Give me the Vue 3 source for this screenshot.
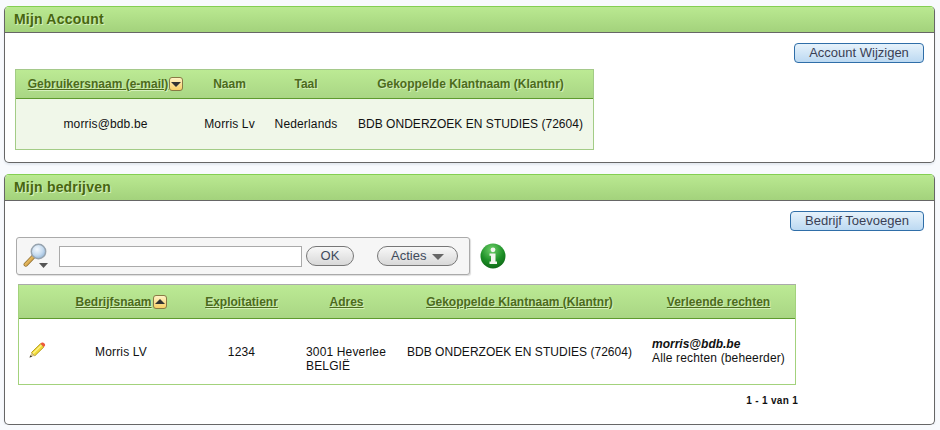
<template>
  <div class="page">
    <section class="panel">
      <h2 class="panel__title">Mijn Account</h2>
      <div class="panel__body panel__body--account">
        <div class="actions">
          <button type="button" class="btn-blue btn-blue--account">Account Wijzigen</button>
        </div>
        <table class="grid grid--account">
          <colgroup>
            <col class="col-user" />
            <col class="col-person" />
            <col class="col-lang" />
            <col class="col-linked" />
          </colgroup>
          <thead>
            <tr>
              <th>
                <span class="sort">
                  <a class="sort__link">Gebruikersnaam (e-mail)</a>
                  <span class="sort__icon"><i class="tri tri--down"></i></span>
                </span>
              </th>
              <th>Naam</th>
              <th>Taal</th>
              <th>Gekoppelde Klantnaam (Klantnr)</th>
            </tr>
          </thead>
          <tbody>
            <tr>
              <td>morris@bdb.be</td>
              <td>Morris Lv</td>
              <td>Nederlands</td>
              <td class="cell-client">BDB ONDERZOEK EN STUDIES (72604)</td>
            </tr>
          </tbody>
        </table>
      </div>
    </section>

    <section class="panel panel--second">
      <h2 class="panel__title">Mijn bedrijven</h2>
      <div class="panel__body panel__body--companies">
        <div class="actions">
          <button type="button" class="btn-blue btn-blue--company">Bedrijf Toevoegen</button>
        </div>

        <div class="toolbar-row">
          <div class="toolbar">
            <svg class="toolbar__lens" width="28" height="26" viewBox="0 0 28 26">
              <defs>
                <radialGradient id="glass" cx="0.4" cy="0.35" r="0.7">
                  <stop offset="0" stop-color="#f4f9fe" />
                  <stop offset="0.6" stop-color="#c4daef" />
                  <stop offset="1" stop-color="#8fb2d4" />
                </radialGradient>
                <linearGradient id="handle" x1="0" y1="0" x2="1" y2="1">
                  <stop offset="0" stop-color="#f6d98c" />
                  <stop offset="1" stop-color="#c98a26" />
                </linearGradient>
              </defs>
              <path d="M10.5 13.5 L2.8 21.5" stroke="#8a6a2c" stroke-width="4.4" stroke-linecap="round" />
              <path d="M10.5 13.5 L2.8 21.5" stroke="url(#handle)" stroke-width="3" stroke-linecap="round" />
              <circle cx="15.5" cy="8.5" r="7.2" fill="url(#glass)" stroke="#97a3ae" stroke-width="1.4" />
              <path d="M16 20 H25 L20.5 25 Z" fill="#555" />
            </svg>
            <input class="toolbar__input" type="text" />
            <button type="button" class="btn-pill btn-pill--ok">OK</button>
            <button type="button" class="btn-pill btn-pill--acties">
              Acties
              <i class="tri tri--menu"></i>
            </button>
          </div>
          <svg class="info" width="26" height="26" viewBox="0 0 26 26">
            <defs>
              <radialGradient id="ball" cx="0.45" cy="0.25" r="0.85">
                <stop offset="0" stop-color="#6fd06a" />
                <stop offset="0.55" stop-color="#1c8f26" />
                <stop offset="1" stop-color="#0a5c12" />
              </radialGradient>
            </defs>
            <circle cx="13" cy="13" r="12.5" fill="url(#ball)" />
            <circle cx="13" cy="6.8" r="2.4" fill="#f2f5ee" />
            <path d="M9.5 10.5 H15.5 V18.5 H17 V21 H9.5 V18.5 H11 V12.8 H9.5 Z" fill="#f2f5ee" />
          </svg>
        </div>

        <table class="grid grid--companies">
          <colgroup>
            <col class="col-edit" />
            <col class="col-name" />
            <col class="col-nr" />
            <col class="col-address" />
            <col class="col-client" />
            <col class="col-rights" />
          </colgroup>
          <thead>
            <tr>
              <th></th>
              <th>
                <span class="sort">
                  <a class="sort__link">Bedrijfsnaam</a>
                  <span class="sort__icon"><i class="tri tri--up"></i></span>
                </span>
              </th>
              <th><a class="sort__link">Exploitatienr</a></th>
              <th><a class="sort__link">Adres</a></th>
              <th><a class="sort__link">Gekoppelde Klantnaam (Klantnr)</a></th>
              <th><a class="sort__link">Verleende rechten</a></th>
            </tr>
          </thead>
          <tbody>
            <tr>
              <td class="cell-edit">
                <svg class="pencil" width="18" height="17" viewBox="0 0 18 17">
                  <path d="M3.5 10.5 L12.5 1.8 L15.8 5 L6.8 13.8 Z" fill="#f2dc3a" stroke="#b59a1a" stroke-width="1" />
                  <path d="M5 11.5 L13.5 3.2" stroke="#fff28a" stroke-width="1.2" />
                  <path d="M12.5 1.8 L13.8 0.6 Q15 0 16 1 L17 2.2 Q17.4 3.4 16.8 4 L15.8 5 Z" fill="#ee5a3c" />
                  <path d="M3.5 10.5 L1.5 15.6 L6.8 13.8 Z" fill="#d8c48e" />
                  <path d="M2.4 13.2 L1.5 15.6 L4.2 14.7 Z" fill="#333" />
                </svg>
              </td>
              <td>Morris LV</td>
              <td>1234</td>
              <td class="cell-left cell-address">3001 Heverlee<br />BELGIË</td>
              <td class="cell-client">BDB ONDERZOEK EN STUDIES (72604)</td>
              <td class="cell-left">
                <b class="rights-user">morris@bdb.be</b><br />Alle rechten (beheerder)
              </td>
            </tr>
          </tbody>
        </table>

        <div class="pager">1 - 1 van 1</div>
      </div>
    </section>
  </div>
</template>

<script setup>
</script>

<style>
body {
  background: #f8fafd;
}
</style>

<style scoped>
.page {
  width: 931px;
  padding: 6px 0 0 4px;
  font-family: "Liberation Sans", Arial, sans-serif;
  font-size: 12px;
  color: #111;
}

.panel {
  border: 1px solid #666;
  border-top-color: #84cf52;
  border-radius: 5px;
  background: #fff;
  box-shadow: 0 2px 2px #e4e9f0;
  overflow: hidden;
}

.panel--second {
  margin-top: 11px;
}

.panel__title {
  height: 25px;
  margin: 0;
  padding-left: 9px;
  border-bottom: 1px solid #666;
  background: linear-gradient(#bae991, #a3d27c);
  color: #47660f;
  font-size: 14px;
  line-height: 24px;
  font-weight: bold;
  letter-spacing: 0.2px;
  text-shadow: 1px 1px 0 #d5f0bc;
}

.panel__body {
  padding: 10px 10px 0;
}

.panel__body--account {
  height: 119px;
}

.panel__body--companies {
  height: 213px;
}

.actions {
  display: flex;
  justify-content: flex-end;
}

.btn-blue {
  height: 20px;
  padding: 0;
  border: 1px solid #2f6ea8;
  border-radius: 4px;
  background: linear-gradient(#e6f2fb, #bcd9f2);
  color: #3a3f55;
  font: 13px/18px "Liberation Sans", Arial, sans-serif;
}

.btn-blue--account {
  width: 130px;
}

.btn-blue--company {
  width: 134px;
}

.grid {
  border-collapse: separate;
  border-spacing: 0;
  text-align: center;
  table-layout: fixed;
}

.grid th {
  border-bottom: 1px solid #5e9b2e;
  background: linear-gradient(#bcea94, #a9d684);
  color: #4c6b1c;
  font-weight: bold;
  text-shadow: 1px 1px 0 #d5f0bc;
  padding: 0;
}

.grid td {
  padding: 0;
  letter-spacing: 0.15px;
}

.grid td.cell-client {
  letter-spacing: 0.03px;
}

.grid--account {
  width: 579px;
  margin: 6px 0 0;
  border: 1px solid #a3cc86;
  border-top-color: #a5c98b;
}

.grid--account th {
  height: 28px;
}

.grid--account td {
  height: 50px;
  background: #f0f7e9;
}

.col-user {
  width: 179px;
}

.col-person {
  width: 69px;
}

.col-lang {
  width: 84px;
}

.grid--companies {
  width: 778px;
  margin: 9px 0 0 3px;
  border: 1px solid #a3d27c;
  border-top-color: #aaa;
}

.grid--companies th {
  height: 33px;
}

.grid--companies td {
  height: 65px;
}

.col-edit {
  width: 36px;
}

.col-name {
  width: 132px;
}

.col-nr {
  width: 109px;
}

.col-address {
  width: 101px;
}

.col-client {
  width: 245px;
}

.sort {
  display: inline-flex;
  align-items: center;
  gap: 1px;
  white-space: nowrap;
}

.sort__link {
  text-decoration: underline;
}

.sort__icon {
  width: 12px;
  height: 12px;
  display: inline-flex;
  align-items: center;
  justify-content: center;
  border: 1px solid #8a7a45;
  border-radius: 3px;
  background: linear-gradient(#fff3c4, #f8cf66);
}

.tri {
  display: block;
  width: 0;
  height: 0;
  border-left: 5px solid transparent;
  border-right: 5px solid transparent;
}

.tri--down {
  border-top: 5px solid #333;
}

.tri--up {
  border-bottom: 5px solid #333;
}

.tri--menu {
  display: inline-block;
  margin-left: 2px;
  border-left-width: 6px;
  border-right-width: 6px;
  border-top: 6px solid #666;
}

.toolbar-row {
  display: flex;
  align-items: center;
  margin: 6px 0 0 1px;
}

.toolbar {
  width: 454px;
  height: 38px;
  box-sizing: border-box;
  display: flex;
  align-items: center;
  padding-left: 6px;
  border: 1px solid #aaa;
  border-radius: 3px;
  background: #f6f6f6;
  box-shadow: 1px 1px 1px #ddd;
}

.toolbar__lens {
  flex-shrink: 0;
}

.toolbar__input {
  width: 243px;
  height: 21px;
  box-sizing: border-box;
  margin-left: 8px;
  padding: 0 2px;
  border: 1px solid #aaa;
  background: #fff;
  outline: none;
}

.btn-pill {
  height: 20px;
  padding: 0;
  border: 1px solid #777;
  border-radius: 10px;
  background: linear-gradient(#f8f8f8, #d8d8d8);
  color: #3f4a5c;
  font: 13px/18px "Liberation Sans", Arial, sans-serif;
}

.btn-pill--ok {
  width: 48px;
  margin-left: 4px;
}

.btn-pill--acties {
  width: 81px;
  margin-left: 23px;
}

.info {
  margin-left: 10px;
  flex-shrink: 0;
}

.cell-left {
  text-align: left;
  line-height: 14px;
}

.grid td.cell-address {
  box-sizing: border-box;
  padding: 14px 0 0 10px;
}

.grid td.cell-left:last-child {
  padding-left: 10px;
  padding-bottom: 2px;
  box-sizing: border-box;
}

.grid td.cell-edit {
  padding-left: 9px;
}

.pencil {
  display: block;
  margin-bottom: 3px;
}

.rights-user {
  font-style: italic;
  letter-spacing: 0;
}

.pager {
  width: 783px;
  margin-top: 10px;
  font-size: 10px;
  font-weight: bold;
  letter-spacing: 0.3px;
  text-align: right;
}
</style>
